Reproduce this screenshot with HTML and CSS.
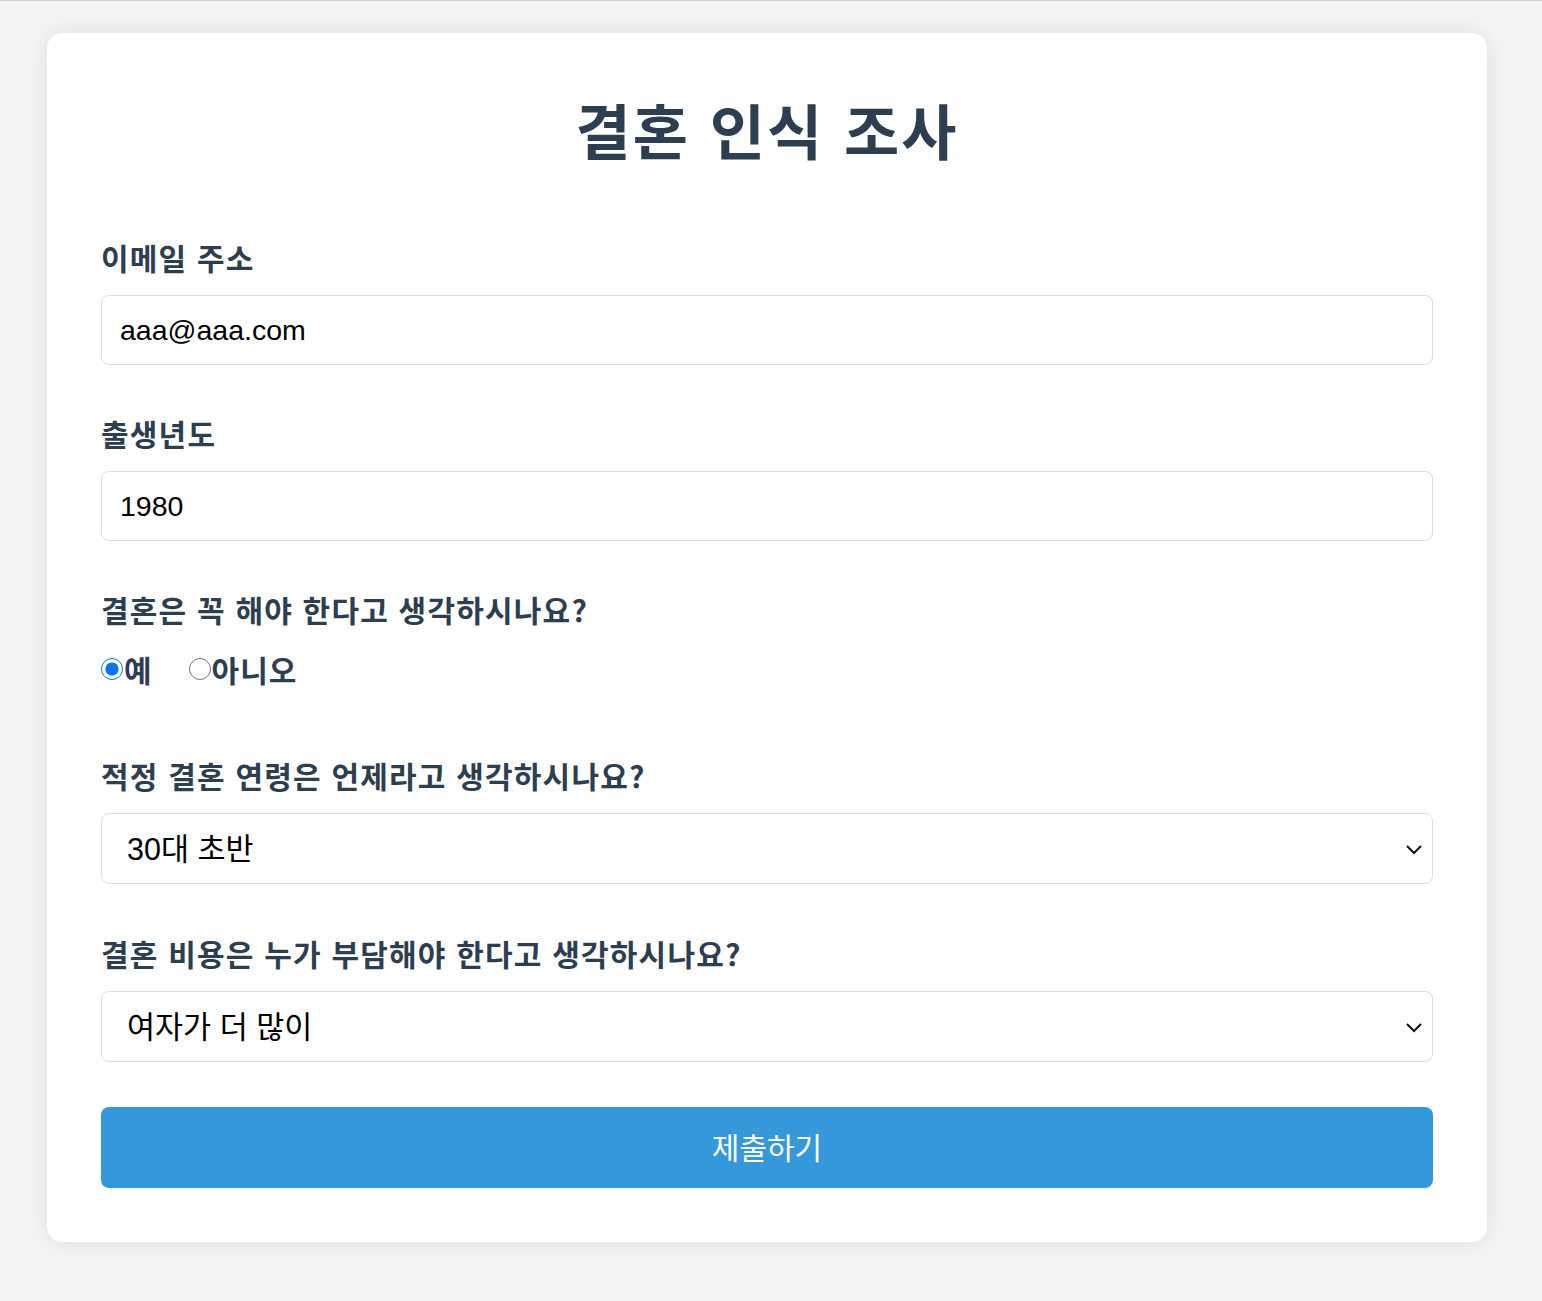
FILE: index.html
```html
<!DOCTYPE html>
<html lang="ko">
<head>
<meta charset="utf-8">
<title>결혼 인식 조사</title>
<link rel="stylesheet" href="styles.css">
</head>
<body>
<div class="card">
  <h1 class="title">결혼 인식 조사</h1>
  <form class="survey">
    <div class="group">
      <label class="label" for="email">이메일 주소</label>
      <input class="field" id="email" type="email" value="aaa@aaa.com">
    </div>
    <div class="group">
      <label class="label" for="year">출생년도</label>
      <input class="field" id="year" type="text" value="1980">
    </div>
    <div class="group group-radio">
      <div class="label">결혼은 꼭 해야 한다고 생각하시나요?</div>
      <div class="radios">
        <label class="radio"><input type="radio" name="must" checked>예</label>
        <label class="radio"><input type="radio" name="must">아니오</label>
      </div>
    </div>
    <div class="group group-select">
      <label class="label" for="age">적정 결혼 연령은 언제라고 생각하시나요?</label>
      <div class="select-wrap">
        <select class="field select" id="age">
          <option>30대 초반</option>
        </select>
        <svg class="chev" width="18" height="12" viewBox="0 0 18 12"><path d="M2 3l7 7 7-7" fill="none" stroke="#111" stroke-width="2"/></svg>
      </div>
    </div>
    <div class="group group-select">
      <label class="label" for="cost">결혼 비용은 누가 부담해야 한다고 생각하시나요?</label>
      <div class="select-wrap">
        <select class="field select" id="cost">
          <option>여자가 더 많이</option>
        </select>
        <svg class="chev" width="18" height="12" viewBox="0 0 18 12"><path d="M2 3l7 7 7-7" fill="none" stroke="#111" stroke-width="2"/></svg>
      </div>
    </div>
    <button class="submit" type="button">제출하기</button>
  </form>
</div>
</body>
</html>
```
FILE: styles.css
```css
html, body {
  margin: 0;
  padding: 0;
}
body {
  background: #f4f4f4;
  border-top: 1px solid #cfcfcf;
  font-family: "Noto Sans CJK KR", "Liberation Sans", sans-serif;
  color: #2c3e50;
  min-height: 1300px;
}
.card {
  width: 1440px;
  box-sizing: border-box;
  margin: 32px 0 0 47px;
  padding: 54px;
  background: #fff;
  border-radius: 15px;
  box-shadow: 0 0 22px rgba(0, 0, 0, 0.09);
}
.title {
  margin: 0 0 66px;
  font-size: 60px;
  line-height: 84px;
  font-weight: 700;
  text-align: center;
  letter-spacing: 2px;
  word-spacing: 1px;
  color: #2c3e50;
}
.survey {
  display: flex;
  flex-direction: column;
}
.group {
  display: flex;
  flex-direction: column;
  margin-bottom: 48px;
}
.label {
  display: block;
  font-size: 30px;
  line-height: 40px;
  font-weight: 700;
  letter-spacing: 1.2px;
  margin-bottom: 18px;
  color: #2c3e50;
}
.field {
  height: 70px;
  box-sizing: border-box;
  border: 1.5px solid #dedede;
  border-radius: 8px;
  padding: 0 18px;
  font-family: "Liberation Sans", "Noto Sans CJK KR", sans-serif;
  font-size: 28.5px;
  color: #000;
  background: #fff;
  outline: none;
}
.group-select {
  margin-bottom: 49px;
}
.select-wrap {
  position: relative;
}
.select {
  width: 100%;
  height: 71px;
  appearance: none;
  -webkit-appearance: none;
  padding-left: 25px;
  font-size: 30.5px;
}
.chev {
  position: absolute;
  right: 10px;
  top: 30px;
  pointer-events: none;
}
.group-radio {
  margin-bottom: 64px;
}
.radios {
  display: flex;
  align-items: center;
  gap: 36px;
  height: 44px;
}
.radio {
  display: flex;
  align-items: center;
  font-size: 30px;
  font-weight: 700;
  letter-spacing: 1px;
  color: #2c3e50;
}
.radio input {
  width: 22px;
  height: 22px;
  margin: 0 1px 0 0;
  accent-color: #0075ff;
}
.submit {
  height: 81px;
  margin-top: -4px;
  border: none;
  border-radius: 8px;
  background: #3498db;
  color: #fff;
  font-family: "Noto Sans CJK KR", sans-serif;
  font-size: 30px;
  font-weight: 400;
  line-height: 1;
  padding-bottom: 4px;
}
```
